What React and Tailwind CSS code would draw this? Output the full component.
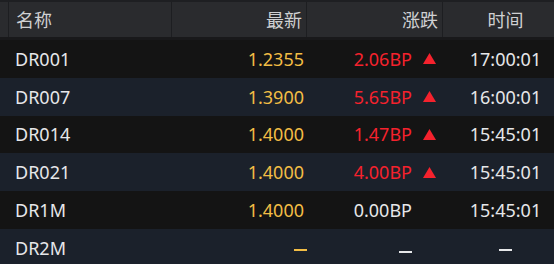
const rows = [
  { name: 'DR001', last: '1.2355', chg: '2.06BP', up: true, time: '17:00:01' },
  { name: 'DR007', last: '1.3900', chg: '5.65BP', up: true, time: '16:00:01' },
  { name: 'DR014', last: '1.4000', chg: '1.47BP', up: true, time: '15:45:01' },
  { name: 'DR021', last: '1.4000', chg: '4.00BP', up: true, time: '15:45:01' },
  { name: 'DR1M', last: '1.4000', chg: '0.00BP', up: false, time: '15:45:01' },
  { name: 'DR2M', last: null, chg: null, up: false, time: null },
];

const cols = 'grid grid-cols-[9px_163px_135px_136px_111px]';

function Dash({ className }) {
  return <span className={'inline-block w-[13px] h-[2px] align-middle translate-y-[2px] ' + className} />;
}

function Triangle() {
  return (
    <svg width="13" height="11" viewBox="0 0 13 11" className="inline-block">
      <polygon points="6.5,0 13,11 0,11" fill="#f5222d" />
    </svg>
  );
}

export default function App() {
  return (
    <div className="w-[554px] h-[264px] overflow-hidden bg-[#141414] text-[18px] leading-none font-['Noto_Sans','Noto_Sans_CJK_SC',sans-serif]">
      <div className={cols + ' h-[40px] bg-[#2a2b2e] border-t-2 border-b-[3px] border-t-[#1e1f22] border-b-[#19191b] text-[#cfd0d2]'}>
        <div className="border-r border-[#1d1e21]" />
        <div className="flex items-center pl-[7px] border-r border-[#1d1e21]">名称</div>
        <div className="flex items-center justify-end pr-[4px] border-r border-[#1d1e21]">最新</div>
        <div className="flex items-center justify-end pr-[4px] border-r border-[#1d1e21]">涨跌</div>
        <div className="flex items-center justify-center pl-[14px]">时间</div>
      </div>
      {rows.map((r, i) => (
        <div key={r.name} className={cols + ' h-[37.75px] ' + (i % 2 ? 'bg-[#1b212b]' : 'bg-[#141414]')}>
          <div />
          <div className="flex items-center pl-[6px] text-[#e6e7e9]">{r.name}</div>
          <div className="flex items-center justify-end pr-[3px] text-[#f2bd45]">
            {r.last ?? <Dash className="bg-[#f2bd45] -mr-[3px]" />}
          </div>
          <div className="flex items-center justify-end pr-[7px] gap-[11px]">
            <span className={r.up ? 'text-[#f5222d]' : 'text-[#e6e7e9]'}>
              {r.chg ?? <Dash className="bg-[#e6e7e9]" />}
            </span>
            <span className="w-[13px] flex items-center">{r.up && <Triangle />}</span>
          </div>
          <div className="flex items-center justify-center pl-[14px] text-[#e6e7e9]">
            {r.time ?? <Dash className="bg-[#e6e7e9]" />}
          </div>
        </div>
      ))}
    </div>
  );
}
